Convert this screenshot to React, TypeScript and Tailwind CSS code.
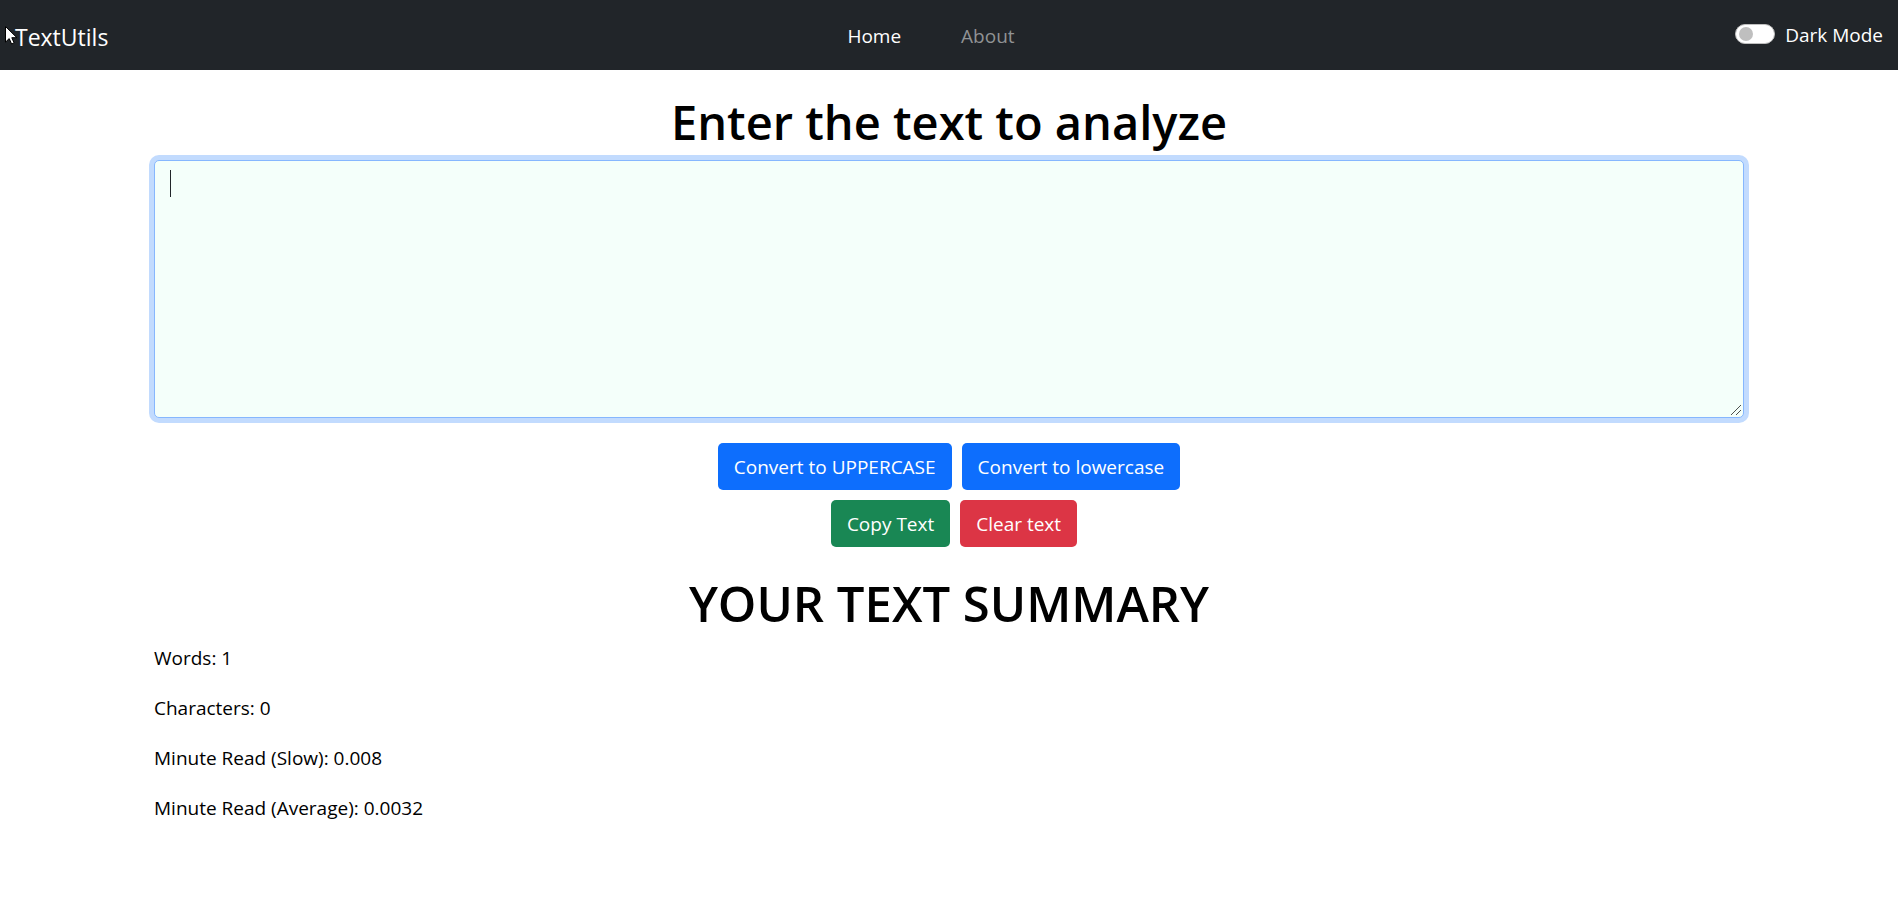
import { useState } from "react";

const button =
  "h-[47px] rounded-[5px] px-4 text-[19px] leading-[30px] text-white cursor-pointer";

export default function App() {
  const [text, setText] = useState("");
  const [dark, setDark] = useState(false);
  const words = text.split(" ").length;

  return (
    <div
      className={`min-h-screen font-['Open_Sans','Noto_Sans',sans-serif] text-[19px] leading-[30px] ${
        dark ? "bg-[#042743] text-white" : "bg-white text-black"
      }`}
    >
      <nav className="relative flex h-[70px] items-center bg-[#212529] px-[15px]">
        <svg
          className="pointer-events-none absolute left-[5px] top-[25px] h-[20px] w-[13px]"
          viewBox="0 0 13 20"
          aria-hidden="true"
        >
          <path
            d="M.5 1.5v15.6l3.7-3.5 2.4 5.4 2.5-1.1-2.3-5.2h5.1z"
            fill="#fff"
            stroke="#000"
          />
        </svg>
        <div className="flex-1 pt-1">
          <a href="#home" className="text-[23px] leading-[34px] text-white">
            TextUtils
          </a>
        </div>
        <div className="flex gap-[60px] pr-9 pt-[2px]">
          <a href="#home" className="text-white">
            Home
          </a>
          <a href="#about" className="text-[#909294]">
            About
          </a>
        </div>
        <div className="flex flex-1 items-center justify-end gap-[10px]">
          <input
            id="dark-mode"
            type="checkbox"
            role="switch"
            checked={dark}
            onChange={(e) => setDark(e.target.checked)}
            className="mb-[2px] flex h-5 w-10 appearance-none items-center rounded-full border border-[#bfbfbf] bg-white px-[3px] before:size-[14px] before:rounded-full before:bg-[#bfbfbf] checked:justify-end checked:bg-[#0d6efd] checked:before:bg-white"
          />
          <label htmlFor="dark-mode" className="text-white">
            Dark Mode
          </label>
        </div>
      </nav>

      <main className="mx-auto max-w-[1622px] px-4 pt-[22px]">
        <h1 className="text-center text-[47px] font-semibold leading-[60px]">
          <label htmlFor="text">Enter the text to analyze</label>
        </h1>
        <div className="relative mt-2 flex">
          <textarea
            id="text"
            rows={8}
            value={text}
            onChange={(e) => setText(e.target.value)}
            className="h-[258px] w-full resize-y rounded-[5px] border border-[#86b7fe] bg-[#f4fffa] px-4 py-2 text-[#212529] outline-none ring-[5px] ring-[#c2dbfe] [&::-webkit-resizer]:appearance-none"
          />
          <svg
            className="pointer-events-none absolute bottom-[3px] right-[3px] size-[10px]"
            viewBox="0 0 10 10"
            stroke="#4d504e"
            aria-hidden="true"
          >
            <path d="M0 10 10 0M5 10l5-5" />
          </svg>
          {text === "" && (
            <span className="pointer-events-none absolute left-4 top-[10px] h-[27px] w-px bg-[#212529]" />
          )}
        </div>
        <div className="mt-[25px] flex flex-col items-center gap-[10px]">
          <div className="flex gap-[10px]">
            <button
              type="button"
              className={`${button} bg-[#0d6efd]`}
              onClick={() => setText(text.toUpperCase())}
            >
              Convert to UPPERCASE
            </button>
            <button
              type="button"
              className={`${button} bg-[#0d6efd]`}
              onClick={() => setText(text.toLowerCase())}
            >
              Convert to lowercase
            </button>
          </div>
          <div className="flex gap-[10px] pl-[10px]">
            <button
              type="button"
              className={`${button} bg-[#198754]`}
              onClick={() => navigator.clipboard.writeText(text)}
            >
              Copy Text
            </button>
            <button
              type="button"
              className={`${button} bg-[#dc3545]`}
              onClick={() => setText("")}
            >
              Clear text
            </button>
          </div>
        </div>
        <h2 className="mt-[26px] text-center text-[49px] font-semibold leading-[60px]">
          YOUR TEXT SUMMARY
        </h2>
        <div className="mt-[10px] flex flex-col gap-5">
          <p>Words: {words}</p>
          <p>Characters: {text.length}</p>
          <p>Minute Read (Slow): {Number((0.008 * words).toFixed(4))}</p>
          <p>Minute Read (Average): {Number((0.0032 * words).toFixed(4))}</p>
        </div>
      </main>
    </div>
  );
}
